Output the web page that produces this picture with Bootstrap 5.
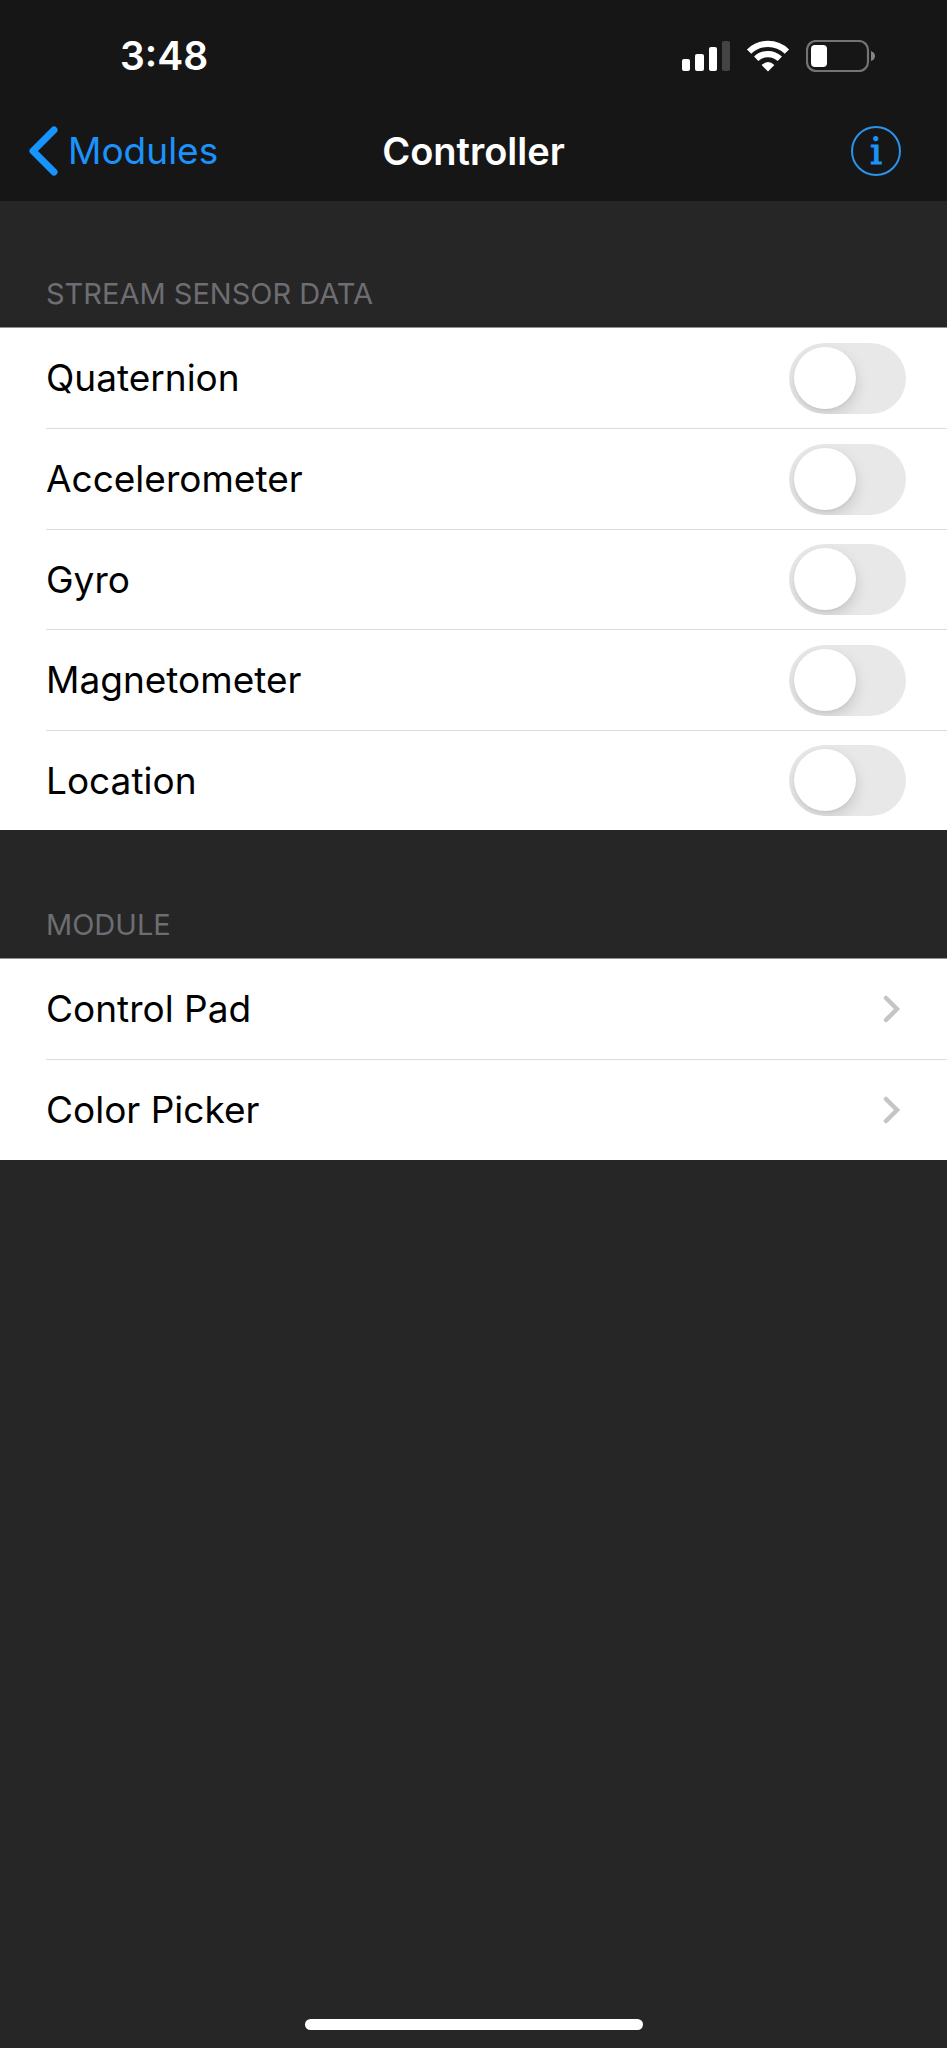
<!DOCTYPE html>
<html lang="en">
<head>
<meta charset="utf-8">
<meta name="viewport" content="width=device-width, initial-scale=1">
<title>Controller</title>
<link href="https://cdn.jsdelivr.net/npm/bootstrap@5.3.0/dist/css/bootstrap.min.css" rel="stylesheet">
<style>
  body { background: #262626; color: #000; font-family: Inter, "Liberation Sans", sans-serif; font-size: 37px; line-height: 48px; }
  .top-area { background: #161616; color: #fff; }
  .status-bar { height: 100px; padding: 12px 72px 0 120px; }
  .clock { font-size: 39px; font-weight: 600; }
  .status-icons { gap: 16px; }
  .title-bar { display: grid; grid-template-columns: 1fr auto 1fr; height: 101px; padding: 0 29px; }
  .title-bar h1 { font-size: 38px; line-height: 48px; font-weight: 600; }
  .back-link { color: #1c92fb; gap: 9px; }
  .info-btn { width: 50px; height: 50px; margin-right: 17px; border: 2px solid #2a93ec; color: #1c92fb; font: 38px/44px "DejaVu Serif", serif; -webkit-text-stroke: 1px #1c92fb; }
  .group-title { color: #6d6d72; font-size: 29px; line-height: 40px; font-weight: 400; padding: 73px 46px 13px; }
  section + section { padding-top: 2px; }
  .rows { background: #fff; padding-left: 46px; border-top: 1px solid #8f8f8f; }
  .rows > * { height: 100px; padding-right: 41px; color: #000; }
  .rows > :nth-child(even) { height: 101px; }
  .rows > * + * { border-top: 1px solid #dcdcde; }
  .rows > a { padding-right: 46px; }
  .form-check-input.toggle { width: 117px; height: 71px; border: 0; border-radius: 36px; background: #e8e8e8; overflow: hidden; padding: 4px 5px; }
  .toggle::before { content: ""; display: block; width: 62px; height: 62px; border-radius: 50%; background: #fff; box-shadow: 1px 6px 14px rgba(0,0,0,.13), 0 1px 3px rgba(0,0,0,.06); }
  .form-check-input.toggle:checked { background: #34c759; }
  .toggle:checked::before { margin-left: auto; }
  .home-bar { width: 338px; height: 11px; margin-bottom: 18px; background: #fff; }
</style>
</head>
<body>
<div class="min-vh-100 d-flex flex-column">
  <header class="top-area">
    <div class="status-bar d-flex align-items-center justify-content-between">
      <span class="clock">3:48</span>
      <div class="status-icons d-flex align-items-center">
        <svg width="48" height="32" viewBox="0 0 48 32" aria-hidden="true">
          <g fill="#fff"><rect y="19" width="8" height="12" rx="2"/><rect x="13" y="14" width="9" height="17" rx="2"/><rect x="27" y="7" width="8" height="24" rx="2"/></g>
          <rect x="40" y="1" width="8" height="30" rx="2" fill="#444"/>
        </svg>
        <svg width="44" height="32" viewBox="0 0 44 32" aria-hidden="true">
          <g fill="none" stroke="#fff" stroke-width="6.2"><path d="M3.1 11.6A27 27 0 0 1 40.9 11.6"/><path d="M10.2 18.8A17 17 0 0 1 33.8 18.8"/></g>
          <path d="M22 31.5 15.6 25Q22 19 28.4 25Z" fill="#fff"/>
        </svg>
        <svg width="69" height="32" viewBox="0 0 69 32" aria-hidden="true">
          <rect x="1" y="1" width="61" height="30" rx="9" fill="none" stroke="#737373" stroke-width="2.2"/>
          <rect x="5" y="5" width="16" height="22" rx="4" fill="#fff"/>
          <path d="M65 11Q69 12.500 69 16T65 21Z" fill="#858585"/>
        </svg>
      </div>
    </div>
    <nav class="title-bar align-items-center">
      <a href="#" class="back-link d-flex align-items-center text-decoration-none">
        <svg width="30" height="50" viewBox="0 0 30 50" aria-hidden="true"><path d="M25 4 4 25 25 46" fill="none" stroke="#1894ff" stroke-width="7" stroke-linecap="round" stroke-linejoin="round"/></svg>
        Modules
      </a>
      <h1 class="m-0">Controller</h1>
      <button type="button" class="info-btn rounded-circle bg-transparent p-0 ms-auto" aria-label="Information">i</button>
    </nav>
  </header>

  <main class="flex-grow-1">
    <section>
      <h2 class="group-title m-0">STREAM SENSOR DATA</h2>
      <div class="rows">
        <div class="d-flex align-items-center justify-content-between"><label for="quaternion">Quaternion</label><input class="form-check-input toggle m-0" type="checkbox" role="switch" id="quaternion"></div>
        <div class="d-flex align-items-center justify-content-between"><label for="accelerometer">Accelerometer</label><input class="form-check-input toggle m-0" type="checkbox" role="switch" id="accelerometer"></div>
        <div class="d-flex align-items-center justify-content-between"><label for="gyro">Gyro</label><input class="form-check-input toggle m-0" type="checkbox" role="switch" id="gyro"></div>
        <div class="d-flex align-items-center justify-content-between"><label for="magnetometer">Magnetometer</label><input class="form-check-input toggle m-0" type="checkbox" role="switch" id="magnetometer"></div>
        <div class="d-flex align-items-center justify-content-between"><label for="location">Location</label><input class="form-check-input toggle m-0" type="checkbox" role="switch" id="location"></div>
      </div>
    </section>
    <section>
      <h2 class="group-title m-0">MODULE</h2>
      <div class="rows">
        <a href="#" class="d-flex align-items-center justify-content-between text-decoration-none">Control Pad
          <svg width="18" height="30" viewBox="0 0 18 30" aria-hidden="true"><path d="M3 4 14 15 3 26" fill="none" stroke="#c5c5c7" stroke-width="4.500" stroke-linecap="round"/></svg></a>
        <a href="#" class="d-flex align-items-center justify-content-between text-decoration-none">Color Picker
          <svg width="18" height="30" viewBox="0 0 18 30" aria-hidden="true"><path d="M3 4 14 15 3 26" fill="none" stroke="#c5c5c7" stroke-width="4.500" stroke-linecap="round"/></svg></a>
      </div>
    </section>
  </main>

  <div class="home-bar rounded-pill mx-auto"></div>
</div>
<script src="https://cdn.jsdelivr.net/npm/bootstrap@5.3.0/dist/js/bootstrap.bundle.min.js"></script>
</body>
</html>
